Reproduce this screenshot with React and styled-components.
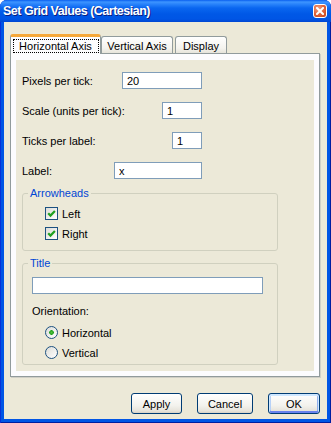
import React, { useState } from "react";
import styled, { createGlobalStyle } from "styled-components";

const GlobalStyle = createGlobalStyle`
 html, body {
  margin: 0;
  padding: 0;
  background: #ffffff;
 }
 body {
  font-family: "Liberation Sans", Arial, sans-serif;
  font-size: 11px;
  color: #000000;
 }
 * {
  box-sizing: border-box;
 }
`;

const Check = () => (
 <svg width="9" height="9" viewBox="0 0 9 9">
  <path d="M1.2 4.2 L3.5 6.6 L7.9 2" fill="none" stroke="#21A121" strokeWidth="2.2" />
 </svg>
);

const App = () => {
 const [arrows, setArrows] = useState({ left: true, right: true });
 const [orientation, setOrientation] = useState("horizontal");

 return (
  <>
   <GlobalStyle />
   <Window>
    <TitleBar>
     <TitleText>Set Grid Values (Cartesian)</TitleText>
     <CloseButton aria-label="Close">
      <svg width="8" height="8" viewBox="0 0 8 8">
       <path d="M1 1 L7 7 M7 1 L1 7" stroke="#ffffff" strokeWidth="2" strokeLinecap="square" />
      </svg>
     </CloseButton>
    </TitleBar>

    <Body>
     <TabStrip>
      <Tab $active $width={91}>
       <FocusLabel>Horizontal Axis</FocusLabel>
      </Tab>
      <Tab $width={72}>Vertical Axis</Tab>
      <Tab $width={52} $gap={2}>Display</Tab>
     </TabStrip>

     <Panel>
      <PanelInner>
       <Fields>
        <FieldRow>
         <span>Pixels per tick:</span>
         <TextBox $width={80} defaultValue="20" />
        </FieldRow>
        <FieldRow>
         <span>Scale (units per tick):</span>
         <TextBox $width={40} defaultValue="1" />
        </FieldRow>
        <FieldRow>
         <span>Ticks per label:</span>
         <TextBox $width={30} defaultValue="1" />
        </FieldRow>
        <FieldRow>
         <span>Label:</span>
         <TextBox $width={88} defaultValue="x" />
        </FieldRow>
       </Fields>

       <Group $top={8}>
        <Legend>Arrowheads</Legend>
        <OptionList $padLeft={22} $padTop={7} $padBottom={10}>
         <Option onClick={() => setArrows({ ...arrows, left: !arrows.left })}>
          <CheckBox>{arrows.left && <Check />}</CheckBox>
          Left
         </Option>
         <Option onClick={() => setArrows({ ...arrows, right: !arrows.right })}>
          <CheckBox>{arrows.right && <Check />}</CheckBox>
          Right
         </Option>
        </OptionList>
       </Group>

       <Group $top={6}>
        <Legend>Title</Legend>
        <TitleContent>
         <TextBox $width={231} defaultValue="" />
         <Caption>Orientation:</Caption>
         <OptionList $padLeft={13} $padTop={8} $padBottom={5}>
          <Option onClick={() => setOrientation("horizontal")}>
           <Radio $checked={orientation === "horizontal"} />
           Horizontal
          </Option>
          <Option onClick={() => setOrientation("vertical")}>
           <Radio $checked={orientation === "vertical"} />
           Vertical
          </Option>
         </OptionList>
        </TitleContent>
       </Group>
      </PanelInner>
     </Panel>

     <ButtonRow>
      <Button $width={51}>Apply</Button>
      <Button $width={56}>Cancel</Button>
      <Button $width={52} $default>OK</Button>
     </ButtonRow>
    </Body>
   </Window>
  </>
 );
};

const Window = styled.div`
 width: 331px;
 height: 423px;
 display: flex;
 flex-direction: column;
 background: #0055e5;
 border-radius: 7px 7px 0 0;
 overflow: hidden;
 box-shadow: inset 1px 0 0 #0831d9, inset -1px 0 0 #001ea0, inset 0 -1px 0 #001ea0;
`;

const TitleBar = styled.div`
 height: 22px;
 flex: none;
 display: flex;
 align-items: center;
 justify-content: space-between;
 padding: 0 4px 0 3px;
 background: linear-gradient(
  to bottom,
  #0a5fef 0px,
  #3d95ff 2px,
  #2a84fb 4px,
  #0a66f0 8px,
  #0058e6 14px,
  #0055e5 19px,
  #0046d2 22px
 );
`;

const TitleText = styled.span`
 color: #ffffff;
 font-weight: bold;
 font-size: 12.5px;
 letter-spacing: -0.5px;
 text-shadow: 1px 1px 0 #0a1e80;
`;

const CloseButton = styled.div`
 width: 14px;
 height: 14px;
 border: 1px solid #ffffff;
 border-radius: 3px;
 display: flex;
 align-items: center;
 justify-content: center;
 background: radial-gradient(circle at 35% 30%, #f2a283 0%, #e3683f 45%, #c3411a 100%);
`;

const Body = styled.div`
 flex: 1;
 display: flex;
 flex-direction: column;
 margin: 0 4px 4px;
 padding: 12px 7px 5px 6px;
 background: #ece9d8;
`;

const TabStrip = styled.div`
 height: 19px;
 display: flex;
 align-items: flex-end;
 position: relative;
 z-index: 1;
`;

const Tab = styled.div`
 width: ${(p) => p.$width}px;
 height: ${(p) => (p.$active ? 20 : 17)}px;
 margin-left: ${(p) => p.$gap || 0}px;
 margin-bottom: ${(p) => (p.$active ? -1 : 0)}px;
 display: flex;
 align-items: center;
 justify-content: center;
 border: 1px solid #919b9c;
 border-bottom: none;
 border-radius: 3px 3px 0 0;
 border-top: ${(p) => (p.$active ? "3px solid #f5a83a" : "1px solid #919b9c")};
 background: ${(p) =>
  p.$active ? "#fcfcfe" : "linear-gradient(to bottom, #ffffff, #f4f3ee 70%, #e6e4da)"};
 padding-top: ${(p) => (p.$active ? 0 : 1)}px;
 white-space: nowrap;
`;

const FocusLabel = styled.span`
 display: flex;
 align-items: center;
 justify-content: center;
 width: 86px;
 height: 14px;
 border: 1px dotted #000000;
`;

const Panel = styled.div`
 height: 324px;
 border: 1px solid #919b9c;
 padding: 6px 5px 5px 5px;
 background: #fcfcfe;
 box-shadow: 1px 1px 0 #d0cfc6;
`;

const PanelInner = styled.div`
 height: 100%;
 background: #ece9d8;
 padding: 12px 6px 0;
 display: flex;
 flex-direction: column;
 align-items: flex-start;
`;

const Fields = styled.div`
 display: flex;
 flex-direction: column;
 gap: 13px;
`;

const FieldRow = styled.div`
 width: 180px;
 height: 17px;
 display: flex;
 align-items: center;
 justify-content: space-between;
`;

const TextBox = styled.input`
 width: ${(p) => p.$width}px;
 height: 17px;
 border: 1px solid #7f9db9;
 background: #ffffff;
 padding: 0 4px;
 font-family: "Liberation Sans", Arial, sans-serif;
 font-size: 11px;
 color: #000000;
 outline: none;
`;

const Group = styled.fieldset`
 width: 256px;
 margin: ${(p) => p.$top}px 0 0;
 padding: 0;
 border: 1px solid #d0d0bf;
 border-radius: 3px;
 min-inline-size: 0;
`;

const Legend = styled.legend`
 margin-left: 5px;
 padding: 0 2px;
 line-height: 13px;
 color: #0046d5;
`;

const OptionList = styled.div`
 display: flex;
 flex-direction: column;
 gap: 7px;
 padding: ${(p) => p.$padTop}px 0 ${(p) => p.$padBottom}px ${(p) => p.$padLeft}px;
`;

const Option = styled.div`
 display: flex;
 align-items: center;
 gap: 4px;
 height: 13px;
 cursor: default;
`;

const CheckBox = styled.span`
 width: 13px;
 height: 13px;
 flex: none;
 border: 1px solid #1c5180;
 background: linear-gradient(135deg, #dcdcd7, #ffffff);
 display: flex;
 align-items: center;
 justify-content: center;
`;

const Radio = styled.span`
 width: 13px;
 height: 13px;
 flex: none;
 border: 1px solid #1c5180;
 border-radius: 50%;
 background: ${(p) =>
  p.$checked
   ? "radial-gradient(circle, #55c23c 0, #21a121 2px, transparent 2.6px), linear-gradient(135deg, #dcdcd7, #ffffff)"
   : "linear-gradient(135deg, #dcdcd7, #ffffff)"};
`;

const TitleContent = styled.div`
 display: flex;
 flex-direction: column;
 align-items: flex-start;
 padding: 7px 0 0 9px;
`;

const Caption = styled.div`
 margin-top: 11px;
 line-height: 13px;
`;

const ButtonRow = styled.div`
 display: flex;
 justify-content: flex-end;
 gap: 15px;
 margin-top: 16px;
`;

const Button = styled.button`
 width: ${(p) => p.$width}px;
 height: 21px;
 border: 1px solid #003c74;
 border-radius: 3px;
 background: linear-gradient(to bottom, #ffffff, #f3f2ed 60%, #e6e3da 90%, #d6d0c5);
 box-shadow: ${(p) =>
  p.$default ? "inset 0 1px 0 1px #cee7ff, inset 0 -1px 0 1px #6982ee, inset 1px 0 0 1px #b7d1f7, inset -1px 0 0 1px #91b0ee" : "none"};
 font-family: "Liberation Sans", Arial, sans-serif;
 font-size: 11px;
 color: #000000;
 padding: 0;
`;

export default App;
